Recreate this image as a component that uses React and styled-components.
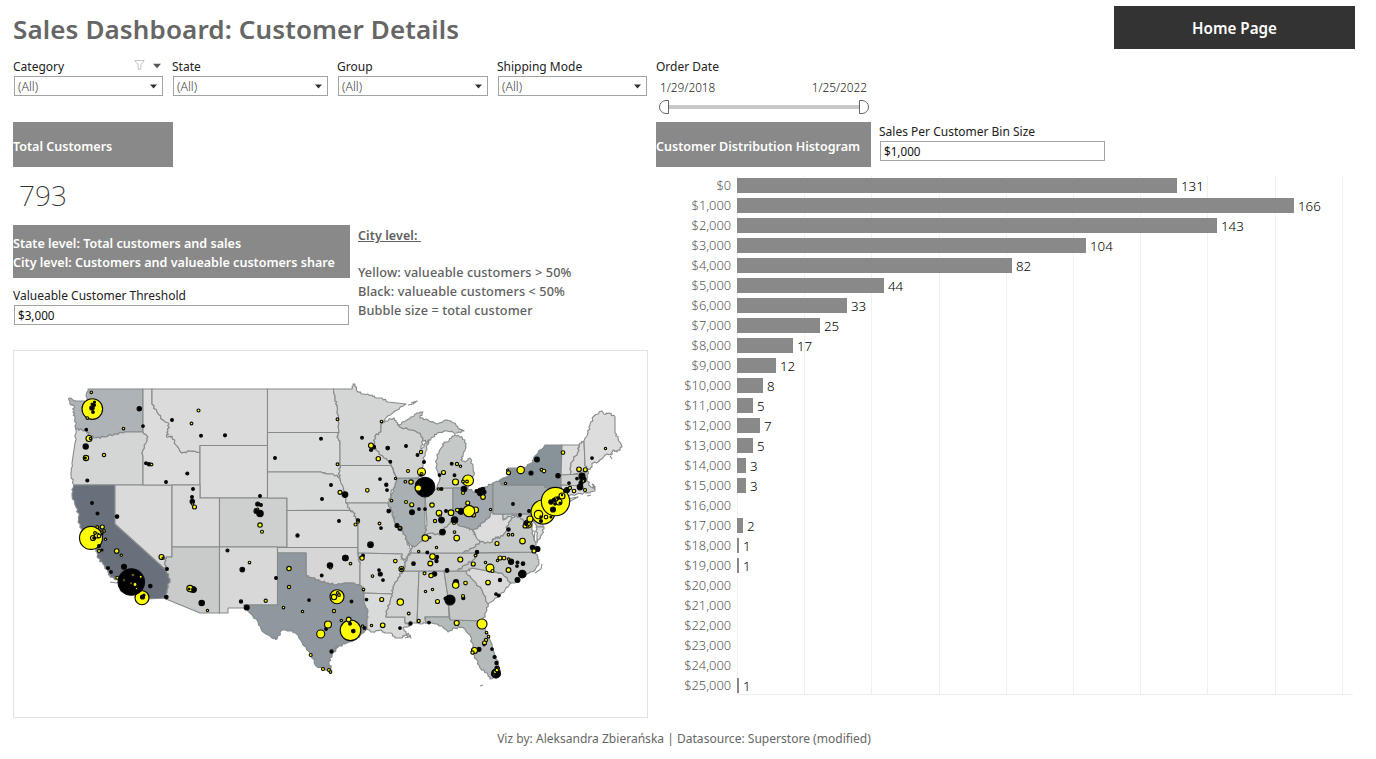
import React from "react";
import styled, { createGlobalStyle } from "styled-components";

const GlobalStyle = createGlobalStyle`
  * { box-sizing: border-box; }
  body {
    margin: 0;
    background: #fff;
    font-family: "Noto Sans", "Open Sans", sans-serif;
    font-size: 12px;
    color: #333;
  }
`;

const Page = styled.div`
  width: 1376px;
  height: 759px;
  padding: 6px 21px 0 13px;
  overflow: hidden;
  white-space: nowrap;
`;

const Header = styled.header`
  display: flex;
  justify-content: space-between;
  height: 54px;
`;

const Title = styled.h1`
  margin: 5px 0 0;
  font-size: 26px;
  line-height: 36px;
  font-weight: 600;
  letter-spacing: 0.12px;
  color: #666;
`;

const HomeButton = styled.button`
  width: 241px;
  height: 43px;
  padding: 1px 0 0;
  border: 0;
  background: #333;
  color: #fff;
  font: 600 15.2px "Noto Sans", sans-serif;
`;

const Filters = styled.div`
  display: flex;
  height: 62px;
`;

const Filter = styled.div`
  width: ${(p) => p.$w}px;
  padding-right: 9px;
`;

const FieldLabel = styled.div`
  display: flex;
  justify-content: space-between;
  height: 15px;
  font-size: 12px;
  line-height: 14px;
  color: #222;
`;

const LabelIcons = styled.span`
  display: flex;
  gap: 8px;
  padding: 0 2px 0 0;
`;

const Field = styled.div`
  display: flex;
  align-items: center;
  justify-content: space-between;
  height: 20px;
  margin: 1px 0 0 1px;
  padding: 0 5px ${(p) => (p.$input ? 1 : 0)}px 3px;
  border: 1px solid #a3a3a3;
  font-size: ${(p) => (p.$input ? 11.7 : 12.3)}px;
  font-weight: ${(p) => (p.$input ? 400 : 300)};
  color: ${(p) => (p.$input ? "#111" : "#444")};
`;

const DateRange = styled.div`
  width: 215px;
`;

const Dates = styled.div`
  display: flex;
  justify-content: space-between;
  padding: 4px 4px 0 4px;
  font-size: 11.8px;
  line-height: 16px;
  font-weight: 300;
  color: #222;
`;

const Slider = styled.svg`
  display: block;
  margin: 5px 0 0 3px;
`;

const Columns = styled.main`
  display: grid;
  grid-template-columns: 635px 699px;
  column-gap: 8px;
`;

const Banner = styled.div`
  width: ${(p) => p.$w}px;
  height: ${(p) => p.$h}px;
  padding-top: ${(p) => p.$pad}px;
  background: #898989;
  color: #fff;
  font-size: 12.55px;
  font-weight: 600;
  line-height: 19px;
`;

const Total = styled.div`
  height: 58px;
  padding: 8px 0 0 6px;
  font-size: 28px;
  line-height: 40px;
  font-weight: 200;
  color: #333;
`;

const LevelRow = styled.div`
  display: flex;
  gap: 8px;
  height: 125px;
`;

const Levels = styled.div`
  width: 337px;
`;

const InputGroup = styled.div`
  width: ${(p) => p.$w}px;
  padding: ${(p) => p.$pad}px 1px 0 0;
`;

const Legend = styled.div`
  padding-top: 1px;
  font-size: 12.7px;
  line-height: 19px;
  font-weight: 500;
  letter-spacing: 0.1px;
  color: #606060;
  white-space: pre;
`;

const LegendHead = styled.div`
  height: 37px;
  font-size: 12.5px;
  text-decoration: underline;
  font-weight: 600;
`;

const MapFrame = styled.div`
  height: 368px;
  border: 1px solid #e2e2e2;
  svg { display: block; margin: -1px; }
`;

const HistHead = styled.div`
  display: flex;
  gap: 8px;
`;

const Histogram = styled.div`
  display: flex;
  margin-top: 9px;
`;

const AxisLabels = styled.div`
  width: 81px;
  padding-right: 6px;
  text-align: right;
`;

const AxisLabel = styled.div`
  height: 20px;
  font-size: 12.8px;
  line-height: 18px;
  font-weight: 300;
  color: #555;
`;

const Plot = styled.div`
  width: 616px;
  height: 519px;
  border-bottom: 1px solid #eee;
  background: repeating-linear-gradient(to right, #f0f0f0 0 1px, transparent 1px 67.2px);
`;

const BarRow = styled.div`
  display: flex;
  height: 20px;
  padding-top: 2px;
`;

const Bar = styled.div`
  height: 15px;
  background: #898989;
`;

const BarValue = styled.span`
  margin-left: 4px;
  font-size: 13.3px;
  line-height: 16px;
  font-weight: 300;
  color: #000;
`;

const Footer = styled.footer`
  padding-top: 11px;
  text-align: center;
  font-size: 12.05px;
  line-height: 20px;
  color: #666;
`;

const COUNTS = [131, 166, 143, 104, 82, 44, 33, 25, 17, 12, 8, 5, 7, 5, 3, 3, 0, 2, 1, 1, 0, 0, 0, 0, 0, 1];
const PX_PER_CUSTOMER = 3.364;
const barWidth = (count) => Math.round(count * PX_PER_CUSTOMER - 1);

const STATES = [
  ["#adb3b6", "69,398 76,401 84,401 86,403 85,408 88,402 86,396 88,389 143,389 143,432 125,432 115,434 104,437 96,438 89,435 87,431 82,430 76,429 75,418 73,412 74,406 70,404"],
  ["#d3d6d5", "76,429 82,430 87,431 89,435 96,438 104,437 115,434 125,432 143,432 148,437 146,443 142,453 143,456 143,485 74,485 71,475 72,463 75,443"],
  ["#68707c", "74,485 115,485 115,524 166,570 170,579 167,590 166,598 147,599 142,601 138,597 128,588 120,581 110,577 108,572 103,564 98,558 97,552 95,547 88,541 83,532 78,522 79,516 76,507 72,495 73,488"],
  ["#dadada", "115,485 172,485 172,557 166,557 165,562 166,570 115,524"],
  ["#dcdcdc", "143,389 152,389 152,404 157,412 163,420 169,424 168,431 167,437 172,436 176,445 182,453 190,451 200,452 200,485 143,485 143,456 142,453 146,443 148,437 143,432"],
  ["#dbdbdb", "152,389 267.5,389 267.5,445.5 200,445.5 200,452 190,451 182,453 176,445 172,436 167,437 168,431 169,424 163,420 157,412 152,404"],
  ["#dcdcdc", "200,445.5 267.5,445.5 267.5,498 200,498"],
  ["#d9d9d9", "172,485 200,485 200,498 219.5,498 219.5,547 172,547"],
  ["#c8cbca", "172,547 219.5,547 219.5,613 200,613 166,599 167,590 170,579 166,570 165,562 166,557 172,557"],
  ["#cdd0cf", "219.5,498 287,498 287,547 219.5,547"],
  ["#d8d8d8", "219.5,547 277.5,547 277.5,605 244,605 246,608 228,608 228,613 219.5,613"],
  ["#dcdcdc", "267.5,389 333.5,389 335,399 337,405 338,420 339,432.5 267.5,432.5"],
  ["#dadcdb", "267.5,432.5 339,432.5 337,437 340,441 340,465 339,473 340,478 333,474 326,474 321,472 267.5,472"],
  ["#d8d9d9", "267.5,472 321,472 326,474 333,474 340,478 343,485 345,494 347,503 350,510 287,510.5 287,498 267.5,498"],
  ["#dadada", "287,510.5 350,510.5 355,513 354,516 358,520 358,547.5 287,547.5"],
  ["#d6d6d6", "277.5,547.5 358,547.5 358,555 360,566 360,586 352,583 345,583 336,585 328,583 320,581 312,578 306,576 306,553 277.5,553"],
  ["#8f989f", "277.5,553 306,553 306,576 312,578 320,581 328,583 336,585 345,583 352,583 360,586 364,588 364,602 368,612 367,622 367,629 360,636 354,640 345,644 338,647 332,655 329,662 332,671 325,670 316,666 311,654 303,645 298,635 292,631 282,630 277,639 272,638 262,631 258,622 250,613 244,605 277.5,605"],
  ["#d3d6d4", "333.5,389 352,389 353,384 355,384 357,391 363,394 372,395 376,398 382,398 388,402 406,404 395,411 385,419 381,424 381,432 375,436 374,445 376,450 384,458 391,462 391,465.5 340,465.5 340,441 337,437 339,432.5 338,420 337,405 335,399"],
  ["#d8dad9", "340,465.5 391,465.5 395,475 397,478 395,487 391,492 390,502 388,503 346,503 345,494 340,478 339,473"],
  ["#d3d5d4", "346,503 388,503 390,508 395,523 400,528 405,535 407,542 411,550 408,556 405,560 401,559 402,554 358,553 358,520 354,516 355,513 350,510"],
  ["#d6d7d7", "358,553 402,554 401,559 406,560 403,570 398,578 393,587 392,594 364,593 364,588 360,586 360,566"],
  ["#d9dada", "364,593 392,594 390,602 387,610 386,617 405,617 405,622 410,626 403,628 406,633 410,635 411,638 405,635 401,638 395,638 391,633 385,633 380,630 372,632 367,629 367,622 368,612 364,602"],
  ["#d1d3d2", "403,571 419,571 417,623 405,623 405,617 386,617 387,610 390,602 392,594 393,587 398,578"],
  ["#d1d3d2", "419,571 444,571 448,597 449,617 425,617 427,622 421,624 417,623"],
  ["#c4c7c6", "444,571 466,571 473,580 482,590 488,604 486,612 483,621 450,620 448,597"],
  ["#b5babb", "425,617 449,617 450,620 482,621 485,628 490,640 495,655 498,663 500,673 498,677 490,679 487,673 480,668 476,659 472,652 473,647 470,635 462,627 455,628 448,632 442,626 432,623 426,623"],
  ["#dadada", "466,572 472,568 493,572 502,573 511,583 505,590 498,597 488,604 482,590 473,580"],
  ["#c5c9c7", "457,571 465,565 473,560 478,553 535,552 538,557 539,563 535,570 527,574 520,578 515,583 511,583 502,573 493,572 472,568 466,571"],
  ["#cccfce", "408,556 411,553 478,553 473,560 465,565 457,571 403,571"],
  ["#ced1d0", "411,553 411,549 414,545 422,541 425,535 430,533 440,535 443,530 450,523 453,520 458,525 467,528 473,530 475,535 480,542 473,548 463,553"],
  ["#a9b0b4", "397,478 418,478 422,483 425,492 425,525 426,532 422,541 414,547 410,545 407,542 405,535 400,528 395,523 393,513 388,503 391,496 395,487"],
  ["#c8ccca", "425,493 431,491 437,488 453,488 453,520 450,523 443,530 440,535 430,533 425,535 427,525"],
  ["#d0d3d1", "381,424 385,421 394,418 396,422 400,427 412,430 420,433 423,440 421,449 429,440 425,453 423,463 422,475 418,478 397,478 391,465 391,462 384,458 376,450 374,445 375,436 381,432"],
  ["#c5c9c7", "398,425 407,420 412,417 417,413 423,412 420,418 428,420 437,424 447,420 455,423 458,428 464,431 457,433 447,431 437,433 433,437 427,442 423,440 420,433 412,430 400,427"],
  ["#c5c9c7", "452,436 458,435 465,440 466,447 463,455 461,460 465,462 470,458 473,467 474,475 470,483 467,488 437,488 440,478 436,468 437,455 442,447 444,442 448,442"],
  ["#a0a8ad", "453,488 467,488 475,492 485,487 493,483 493,510 490,517 482,523 478,528 473,530 467,528 458,525 453,520"],
  ["#dddddd", "493,507 493,514 503,514 503,520 509,516 515,515 509,522 505,533 500,538 496,537 490,543 483,543 478,540 473,530 478,528 482,523 490,517"],
  ["#c5c9c7", "463,553 473,548 480,542 490,543 496,537 500,538 505,533 509,522 515,515 520,517 527,523 532,527 533,535 536,545 536,552"],
  ["#cbcecd", "503,514 540,514 543,527 537,527 533,520 530,521 532,527 525,522 520,517 513,515 503,519"],
  ["#dcdcdc", "536,527 544,527 542,534 537,543 537,535"],
  ["#a4acaf", "493,483 500,480 502,485 543,485 548,489 545,497 548,502 541,514 493,514"],
  ["#ced2d0", "548,489 556,493 558,500 555,510 548,520 543,514 548,502 545,497"],
  ["#889299", "502,485 500,480 510,475 508,468 523,468 533,462 534,457 545,445 562,445 562,457 561,475 562,487 560,496 556,493 548,489 543,485"],
  ["#dddddd", "562,445 579,445 578,452 571,463 570,475 561,475"],
  ["#dadada", "579,445 580,443 584,441 585,463 587,471 570,475 571,463 578,452"],
  ["#cbcfcd", "561,475 583,474 588,471 587,479 590,486 595,489 594,485 592,484 595,491 587,493 582,486 561,485"],
  ["#dadbdb", "561,485 582,486 587,493 577,494 566,496 560,498"],
  ["#dddddd", "584,441 588,433 590,425 594,416 602,411 604,414 609,413 615,417 615,433 618,438 622,447 617,452 613,450 611,455 607,454 600,460 598,462 592,463 592,467 587,471 585,463"],
];

const ISLANDS = "559,504 572,498 578,497 563,505|408,405 413,404 417,401 411,403|587,496 591,495|610,456 612,459|480,686 483,685|110,582 117,583 119,582|120,590 122,592|535,573 541,569 542,564|405,638 410,636|535,531 534,540|337,645 333,650";

/* Borders that follow rivers and shores get a small kink per segment. The kink
   depends on the end points only, so neighbouring states share the same line. */
function roughen(points) {
  const pts = points.split(" ").map((p) => p.split(",").map(Number));
  const out = [];
  pts.forEach((a, i) => {
    const b = pts[(i + 1) % pts.length];
    out.push(a);
    const dx = b[0] - a[0];
    const dy = b[1] - a[1];
    const len = Math.hypot(dx, dy);
    if (Math.abs(dx) < 1 || Math.abs(dy) < 1 || len < 4 || len > 17) return;
    const forward = a[0] < b[0];
    const [s, e] = forward ? [a, b] : [b, a];
    const ux = (e[0] - s[0]) / len;
    const uy = (e[1] - s[1]) / len;
    const kinks = [0.3, 0.5, 0.75].map((t, k) => {
      const h = Math.sin(s[0] * 12.9 + s[1] * 78.2 + e[0] * 3.7 + k * 41.3) * 0.9;
      return [s[0] + (e[0] - s[0]) * t - uy * h, s[1] + (e[1] - s[1]) * t + ux * h];
    });
    out.push(...(forward ? kinks : kinks.reverse()));
  });
  return out.map((p) => p.map((n) => n.toFixed(1)).join(",")).join(" ");
}

/* x y radius; yellow marks a majority of valuable customers, black a minority */
const BUBBLES = [
  ["y", "92.3 409 10.3|91 537.9 11.5|142 597.7 7|350.5 630.3 10.3|337 596.7 7|543 512 12|528 524 4|555.5 501.5 14.2|468 480.5 5.5|482 624 5"],
  ["k", "131.3 582 13.2|425 487 9.8|450 600 5|445.5 598.5 1.5|496 673.5 4.5|481 492 4|476.5 491 1.5|92 408 2.2|94 405 1.5|92 404 1|93 412 1.3|94.5 402 1"],
  ["k", "139.3 408.7 2.2|143 426 1.3|86.3 429.7 1.3|85.7 446.5 2.6|87.3 480.5 1.5|92 503 1.4|97.5 513.5 1.5|117 516.5 1.8|172 420 1.4|201 435.7 1.4|146 463.3 1.4|149 464.3 1.6|187.3 473.5 1.5|166 482 1.4|193 489 1.4|192 497 1.4|192.3 501.5 2.2|108 568 1.5|111 572 1.4|124 566.7 2.5|150.3 586 1.8|166.3 597 1.8|167 569 1.4|201.7 603 2.7|193 589.5 3|102 550 1|99 546 1.4"],
  ["k", "225 435.3 1.5|321 438.7 1.4|275 458 1.4|260 496 1.4|257.7 504 2|261 505 1.4|256.5 511 2.5|260 513.5 3.2|331 485 1.4|322 499 1.4|345 494.5 2.8|339 521 1.4|297.5 535.5 1.6|227.5 550.5 1.5|242.3 569.5 2.3|276 578 1.4|241 601.5 1.6|246.7 607.5 2.5|330 565.5 2.7|345.3 558 2.7|321.7 575.5 1.4|309 600 1.3|351.5 601.5 1.4|326 629 1.4|331.5 651.5 1.6"],
  ["k", "362 437.7 1.4|373.5 447 2|387.7 448 1.8|406 446 1.4|417.5 455 1.4|424 462 1.4|390.3 461.7 1.4|380 479 1.3|386.3 484.7 1.6|387 490 1.3|388.7 511 1.8|412 512.3 2.4|419 509 1.3|425 509 1.3|397 525.5 2|400 528.3 2|358 520.5 1.6|381 528 1.3|370.5 544.7 2.8|439.5 475 1.3|451.7 463.7 1.4|454.5 475.3 1.4|441.5 489 1.4|464 489 2.8|446 511 1.4|461 511.3 3|441.5 520 2.8|454.5 520 3.2|442.5 532 2.8|418 483.5 2|483 489 1.8|484 492 2"],
  ["k", "345.5 558 2.6|363 555.5 1.4|413.5 563.7 1.8|427.3 552.5 1.4|379 570 1.3|380.3 574 2|383 580 1.3|366.5 599.5 1.3|447 570.5 1.9|434.5 574 2.2|437 557 1.6|436.5 561 1.6|456 582 2.5|463.3 598 1.6|410.5 623.5 1.6|400 628 1.3|429 622.5 1.3|364.5 628 1.5|477 552 1.7|479 649.3 2"],
  ["k", "537 459.5 2.4|531 473 2|558 475.7 2.2|513 504 1.4|520 515 1.4|529 511 1.4|508.5 529.5 1.7|532.5 547.5 2.2|537.5 549 2.5|582 476 3|583 479.5 3|580 487 2.8|581 483 2|577 478.5 1.3|567 490 2.5|565 491 1.5|569 483 1.3|592 458 1.3|541 521 1.5|526 523 2|511 561.7 2.6|517.5 562.5 1.5|517 566 1.3|523 563.7 1.8|522.3 574 3.8|517.5 580 2.4|500 580 1.6|496 594 1.3|498.7 595.5 1.5|492 649 1.3|494.5 657 1.5|496.5 663 1.6|497 668 2"],
  ["y", "91.3 392.3 1.3|87.3 418 1.3|123.5 428.5 1.3|89 438.5 3|90.5 438.5 1.2|86 458 2.7|104 455 1.7|151.5 464.5 1.4|198.5 410.5 1.5|191.5 423.5 1.4|194.5 507 2|192.5 504 1.2|102.3 527 2|97.3 527 1.4|104 531 1.4|105.5 539.3 1.2|93 538 2.5|97 535.5 2.5|95 533 1.4|99 536 1.8|102 532 1.2|99 551 1.5|116.7 551 2.3|121.3 555.3 1.2|161.5 557 2.5|163 558 1|190 588.5 3.2|117.3 577.7 1.5|133 575 1.3|140.7 576.7 1.5|135 584.5 2|131 583 1.2|124 580 1.2|136.5 588.5 1.2|207.5 610.5 1.2"],
  ["k", "85.3 458 1|102 534 1|142.5 597 2|144 595 1|94 538 1.2|194 589.5 2.3|189 589 1"],
  ["y", "337.5 419.3 1.4|337.5 464.3 1.4|340 492.3 2|260 525 2.2|262 531.7 1.5|257.7 509 1|330.5 568 1|249.5 562.5 1.3|265.7 600.7 1.6|289 568.5 2.2|289 587 1.6|283.5 607.5 1.3|302.5 611.5 1.2|334 611 1.6|328 624.5 3.5|320.7 634 4|341.3 620.5 1.2|348.7 619.5 2.4|310.7 655 1.5|323 669 1.5|329 670 1.5|330.5 672 1.3|334 597 2.7|337.7 593 1.4|339 595 1.4"],
  ["y", "381.5 421.5 1.3|371 445.5 2.5|371 450 1.5|378.3 458.7 2.2|408 471 1.5|421 452 1.6|421.5 472 4|421.5 474 1.5|405.3 481.7 1.3|411 482 2.2|395.5 478.5 1.1|418.3 488 3.2|367.3 490.3 1.8|406 502 1.5|411.7 504.7 2|391.5 500.5 1.3|355.5 524.5 1.5|358 522 1.2|379.5 523.5 1.4|400 528 1.3|443.5 472.5 2|457 464 1.6|460.5 466.3 1.2|455.5 482 3|463 481.5 1.4|467 481.5 1.4|438.5 489 1.2|463 493 1.5|432 505 2.2|439 513 2.8|440 516 1.2|435 521 1.6|451 512.7 2.8|457.3 510 1.8|467.7 503 2|475.5 510 3|473.5 515 2|469 511 5.7|483 497 2.3|454 523 1.5|425.3 538 3.2|430 537.5 1|454.5 532 1.3|456.7 538 2.8"],
  ["k", "371 450 0.6|421 475 1|454 521 1.6"],
  ["y", "350.5 563.5 1.3|362 558 2.2|395.3 561 1.8|372.5 576 1.3|401.5 569 2.5|363.5 589.5 1.3|381.7 599.5 2|400.3 602 3.2|408.7 613.5 1.4|382.7 625.3 2.3|371.5 625.5 1.2|362.5 626 1.2|432.5 556.5 2.8|430.3 563.5 2.4|418.7 551.5 1.2|436.5 547.5 1.2|424.5 573.3 1.5|431 575.5 2.2|425.5 591.5 1.2|432.5 589.5 1.2|437.5 601.5 2|455.7 585 3.2|465.5 583 1.8|463 596 1.5|460.3 559.5 2.5|475.5 555.5 1.4|473.3 564 2|490 568 3.9|492.5 571 1.5|485.5 562.5 1.2|488 582.5 2.3|418.7 621 1.6|456.7 623 2.5|486.5 632.5 1.3|488.5 636.5 1.3|486 640 1.6|484.5 643 2|474.5 650.5 3|472.5 652.5 1.7"],
  ["y", "563 452.5 1.8|520.7 470 3.7|508.5 472.7 2|507.5 470 1|541.5 469.7 1.4|544 471 1.8|505.5 483.5 1.2|490.5 509.5 1.2|579 469.3 2.3|585.3 469.7 2|583.5 481 1.4|570 488 1.6|574 491 1.8|585 490 1.5|538.5 514.5 4.2|530 519 3|527 525 2.2|525 526 2|529 524 1.5|522.5 541 2.8|497 543.5 2|508.5 534.7 1.3|512.5 534.7 1.3|534 551 2|508.5 559 1.2|500 558 2|504 558 1.8|497.5 560.5 1.2|508.5 570 2.4|495 672 1.5|497 670 1.8|498.5 668 1|494 675 1|546 517 1.8|562 496 3|559 502 3|556 499 2|605.5 448.5 1.2"],
  ["k", "350 623.7 1.4|353.3 631 1.8|551 502 2.2|554 500 1.7|553 509.5 2.5|558 498 1.3|562 495 0.6|541 517 1.2|560 503 1|555 504 1.2|551 517 1|401.5 569 1|372 450 0.6|526 524 1.5|484 645 0.8"],
];

function CustomerMap() {
  return (
    <svg width="635" height="368" viewBox="13 350 635 368">
      <g stroke="#868a8b" strokeWidth="1.1" strokeLinejoin="round">
        {STATES.map(([fill, points], i) => (
          <polygon key={i} fill={fill} points={roughen(points)} />
        ))}
        {ISLANDS.split("|").map((points, i) => (
          <polyline key={i} fill="none" points={points} />
        ))}
      </g>
      {BUBBLES.map(([kind, list], g) => (
        <g key={g} fill={kind === "y" ? "#ffff00" : "#000"} stroke="#0a0a0a" strokeWidth="1.15">
          {list.split("|").map((item, i) => {
            const [x, y, r] = item.split(" ");
            return <circle key={i} cx={x} cy={y} r={r} />;
          })}
        </g>
      ))}
    </svg>
  );
}

const Caret = ({ color = "#333", size = 7 }) => (
  <svg width={size} height={size} viewBox="0 0 7 7">
    <path d="M0 1.5h7L3.5 5.5z" fill={color} />
  </svg>
);

const HeaderCaret = styled.span`
  padding-top: 2px;
  line-height: 0;
`;

const Funnel = () => (
  <svg width="11" height="10" viewBox="0 0 11 10" fill="none" stroke="#c2c2c2">
    <path d="M.8.5h9.4L6.8 4.8v4.5H4.2V4.8z" />
  </svg>
);

const FILTERS = [
  ["Category", 159, true],
  ["State", 165],
  ["Group", 160],
  ["Shipping Mode", 159],
];

export default function App() {
  return (
    <Page>
      <GlobalStyle />
      <Header>
        <Title>Sales Dashboard: Customer Details</Title>
        <HomeButton>Home Page</HomeButton>
      </Header>
      <Filters>
        {FILTERS.map(([name, width, active]) => (
          <Filter key={name} $w={width}>
            <FieldLabel>
              {name}
              {active && (
                <LabelIcons>
                  <Funnel />
                  <HeaderCaret>
                    <Caret color="#555" size={8} />
                  </HeaderCaret>
                </LabelIcons>
              )}
            </FieldLabel>
            <Field>
              (All)
              <Caret />
            </Field>
          </Filter>
        ))}
        <DateRange>
          <FieldLabel>Order Date</FieldLabel>
          <Dates>
            <span>1/29/2018</span>
            <span>1/25/2022</span>
          </Dates>
          <Slider width="210" height="15" viewBox="0 0 210 15">
            <path d="M9 7h192" stroke="#c8c8c8" strokeWidth="4" />
            <path
              d="M9.500.5v13H7A6.500 6.500 0 0 1 7 .5zM200.500.5v13h2.500a6.500 6.500 0 0 0 0-13z"
              fill="#fff"
              stroke="#666"
            />
          </Slider>
        </DateRange>
      </Filters>
      <Columns>
        <section>
          <Banner $w={160} $h={45} $pad={15}>Total Customers</Banner>
          <Total>793</Total>
          <LevelRow>
            <Levels>
              <Banner $w={337} $h={53} $pad={9}>
                State level: Total customers and sales
                <br />
                City level: Customers and valueable customers share
              </Banner>
              <InputGroup $w={337} $pad={11}>
                <FieldLabel>Valueable Customer Threshold</FieldLabel>
                <Field $input>$3,000</Field>
              </InputGroup>
            </Levels>
            <Legend>
              <LegendHead>{"City level: "}</LegendHead>
              <div>Yellow: valueable customers &gt; 50%</div>
              <div>Black: valueable customers &lt; 50%</div>
              <div>Bubble size = total customer</div>
            </Legend>
          </LevelRow>
          <MapFrame>
            <CustomerMap />
          </MapFrame>
        </section>
        <section>
          <HistHead>
            <Banner $w={215} $h={45} $pad={15}>Customer Distribution Histogram</Banner>
            <InputGroup $w={227} $pad={3}>
              <FieldLabel>Sales Per Customer Bin Size</FieldLabel>
              <Field $input>$1,000</Field>
            </InputGroup>
          </HistHead>
          <Histogram>
            <AxisLabels>
              {COUNTS.map((_, i) => (
                <AxisLabel key={i}>${(i * 1000).toLocaleString("en-US")}</AxisLabel>
              ))}
            </AxisLabels>
            <Plot>
              {COUNTS.map((count, i) => (
                <BarRow key={i}>
                  {count > 0 && (
                    <>
                      <Bar style={{ width: barWidth(count) }} />
                      <BarValue>{count}</BarValue>
                    </>
                  )}
                </BarRow>
              ))}
            </Plot>
          </Histogram>
        </section>
      </Columns>
      <Footer>Viz by: Aleksandra Zbierańska | Datasource: Superstore (modified)</Footer>
    </Page>
  );
}
